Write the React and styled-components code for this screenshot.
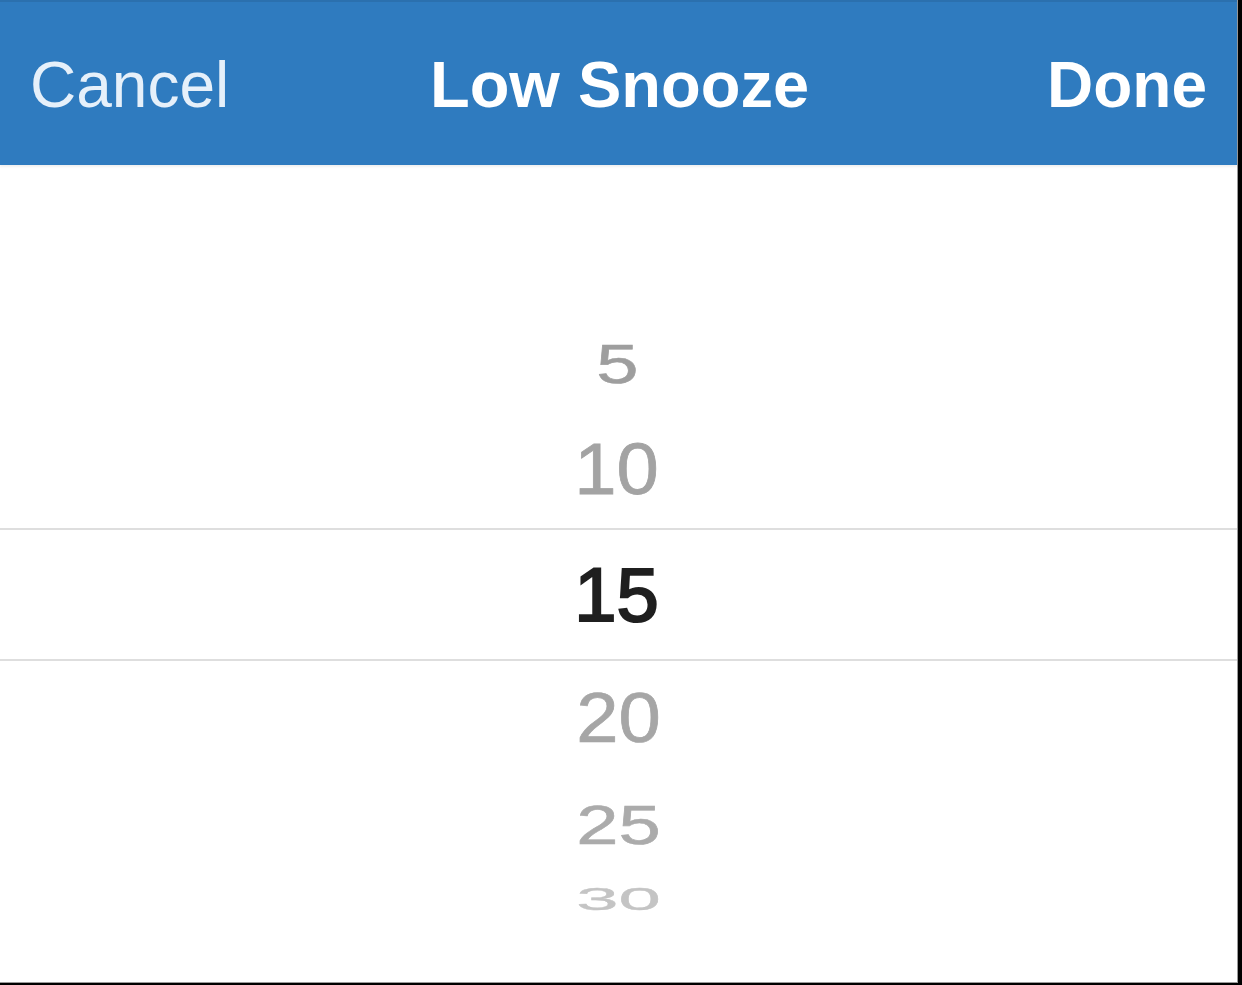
import styled, { createGlobalStyle } from "styled-components";

const GlobalStyle = createGlobalStyle`
  html, body {
    margin: 0;
    padding: 0;
    background: #000;
  }
  body {
    font-family: "Liberation Sans", Arial, sans-serif;
  }
`;

const Screen = styled.div`
  width: 1242px;
  height: 985px;
  background: #000;
  overflow: hidden;
`;

const Frame = styled.div`
  width: 1237px;
  height: 982px;
  background: #fff;
  border-right: 1px solid #9a9a9a;
  border-bottom: 1px solid #9a9a9a;
  display: flex;
  flex-direction: column;
`;

const NavBar = styled.header`
  height: 165px;
  flex-shrink: 0;
  background: #2f7bbf;
  border-top: 2px solid #2b70ae;
  box-sizing: border-box;
  display: grid;
  grid-template-columns: 1fr auto 1fr;
  align-items: center;
  padding: 0 30px 0 30px;
  box-shadow: 0 2px 2px rgba(0, 0, 0, 0.06);
`;

const NavButton = styled.button`
  background: none;
  border: 0;
  padding: 0;
  font-family: "Liberation Sans", Arial, sans-serif;
  font-size: 64px;
  line-height: 1;
  font-weight: ${(p) => (p.$bold ? 700 : 400)};
  color: ${(p) => (p.$bold ? "#ffffff" : "#e6f0fa")};
  justify-self: ${(p) => (p.$right ? "end" : "start")};
  margin-top: 2px;
`;

const Title = styled.h1`
  margin: 0;
  font-size: 65px;
  line-height: 1;
  font-weight: 700;
  color: #fff;
  margin-top: 2px;
  margin-left: 2px;
`;

const Wheel = styled.div`
  flex: 1;
  display: flex;
  flex-direction: column;
  padding-top: 151px;
`;

const Row = styled.div`
  height: ${(p) => p.$h}px;
  display: flex;
  align-items: center;
  justify-content: center;
  box-sizing: border-box;
  ${(p) =>
    p.$selected &&
    `
    border-top: 2px solid #dedede;
    border-bottom: 2px solid #dedede;
  `}
`;

const Value = styled.span`
  display: block;
  font-size: 76px;
  line-height: 1;
  font-weight: 400;
  color: ${(p) => p.$color};
  -webkit-text-stroke: ${(p) => (p.$selected ? 2.2 : 0.8)}px ${(p) => p.$color};
  transform: scaleY(${(p) => p.$scale});
  margin-left: ${(p) => p.$shift}px;
`;

const rows = [
  { v: "5", h: 96, scale: 0.74, color: "#9e9e9e", shift: -2 },
  { v: "10", h: 116, scale: 0.94, color: "#a3a3a3", shift: -4 },
  { v: "15", h: 133, scale: 1, color: "#1f1f1f", shift: -4, selected: true },
  { v: "20", h: 114, scale: 0.92, color: "#a6a6a6", shift: 0 },
  { v: "25", h: 100, scale: 0.72, color: "#ababab", shift: 0 },
  { v: "30", h: 48, scale: 0.42, color: "#c4c4c4", shift: 0 },
];

export default function App() {
  return (
    <Screen>
      <GlobalStyle />
      <Frame>
        <NavBar>
          <NavButton>Cancel</NavButton>
          <Title>Low Snooze</Title>
          <NavButton $bold $right>
            Done
          </NavButton>
        </NavBar>
        <Wheel>
          {rows.map((r) => (
            <Row key={r.v} $h={r.h} $selected={r.selected}>
              <Value
                $scale={r.scale}
                $color={r.color}
                $selected={r.selected}
                $shift={r.shift}
              >
                {r.v}
              </Value>
            </Row>
          ))}
        </Wheel>
      </Frame>
    </Screen>
  );
}
